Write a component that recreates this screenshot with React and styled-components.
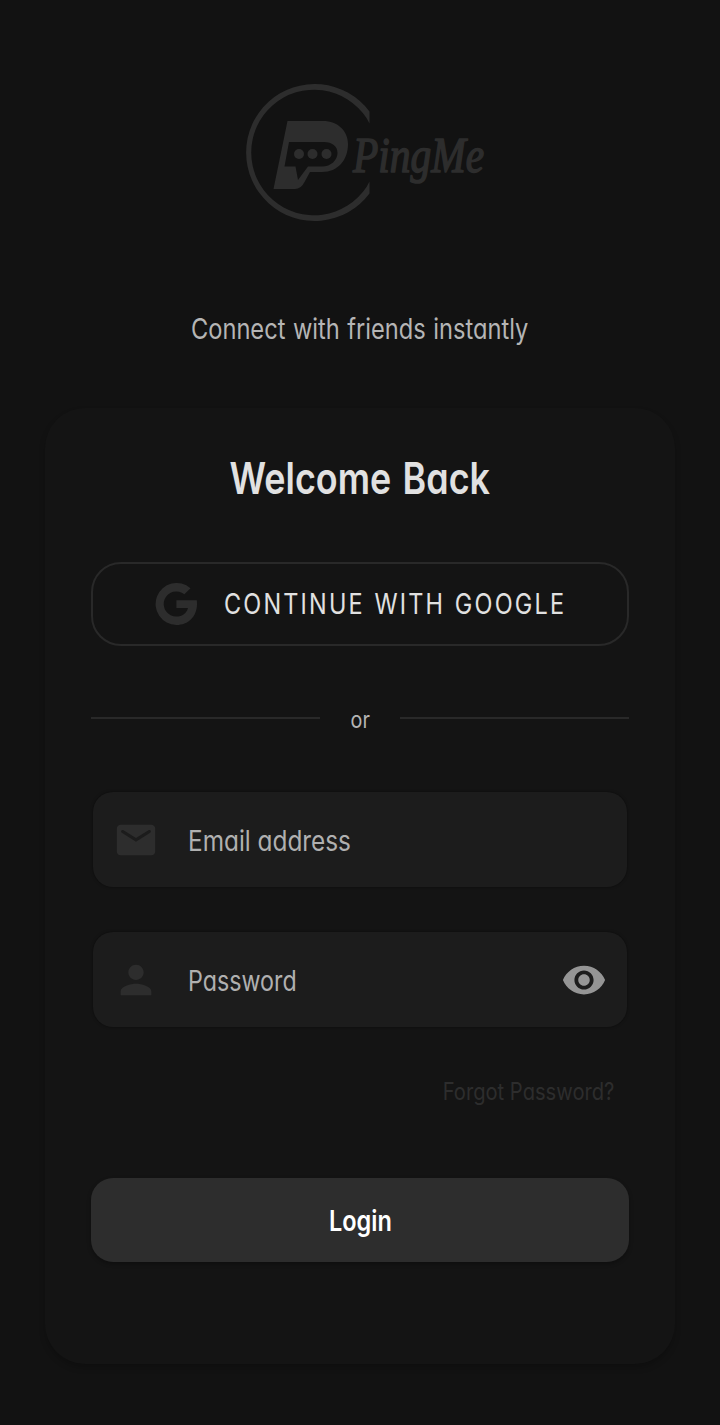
import React from "react";
import styled, { createGlobalStyle } from "styled-components";

const GlobalStyle = createGlobalStyle`
  * { box-sizing: border-box; }
  body {
    margin: 0;
    background: #121212;
    font-family: Inter, "Liberation Sans", sans-serif;
    font-feature-settings: "cv11", "ss03";
  }
`;

const Screen = styled.main`
  min-height: 1425px;
  padding: 78px 45px 0;
  display: flex;
  flex-direction: column;
  align-items: center;
  background: #121212;
`;

const Logo = styled.svg`
  display: block;
  width: 256px;
  height: 150px;
  margin-left: 15px;
  overflow: visible;
  fill: #2d2d2d;
`;

const Narrow = styled.span`
  display: inline-block;
  white-space: nowrap;
  transform: scaleX(${(p) => p.$x});
  transform-origin: ${(p) => p.$from || "center"};
`;

const Tagline = styled.p`
  margin: 81px 0 0;
  height: 40px;
  font-size: 28px;
  line-height: 40px;
  font-weight: 400;
  word-spacing: 1px;
  color: #b5b5b5;
`;

const Card = styled.section`
  width: 630px;
  height: 956px;
  margin-top: 59px;
  padding: 38px 46px 0;
  border-radius: 40px;
  background: #141414;
  box-shadow: 0 4px 6px rgba(0, 0, 0, 0.2);
`;

const Title = styled.h1`
  margin: 0;
  height: 66px;
  font-size: 44px;
  line-height: 64px;
  font-weight: 600;
  word-spacing: 3px;
  text-align: center;
  color: #e1e1e1;
`;

const GoogleButton = styled.button`
  width: 538px;
  height: 84px;
  margin: 50px 0 0;
  padding: 0 0 0 62px;
  display: flex;
  align-items: center;
  gap: 27px;
  border: 2px solid #292929;
  border-radius: 30px;
  background: transparent;
  color: #e1e1e1;
  font: inherit;
  font-size: 28px;
  line-height: 36px;
  letter-spacing: 2.6px;
  word-spacing: 1px;
`;

const Divider = styled.div`
  height: 40px;
  margin-top: 52px;
  display: grid;
  grid-template-columns: 229px 1fr 229px;
  grid-template-rows: 40px;
  align-items: center;
  text-align: center;
  font-size: 23px;
  line-height: 36px;
  font-weight: 400;
  color: #b5b5b5;
`;

const Rule = styled.span`
  height: 2px;
  background: #292929;
`;

const DividerText = styled.span`
  padding-top: 3px;
`;

const Field = styled.label`
  width: 534px;
  height: 95px;
  margin: ${(p) => p.$top}px 2px 0;
  padding: 0 20px;
  display: flex;
  align-items: center;
  border-radius: 20px;
  background: #1c1c1c;
  box-shadow: 0 0 3px rgba(0, 0, 0, 0.5);
  font-size: 28px;
  font-weight: 400;
  color: #b0b0b0;
`;

const FieldText = styled.span`
  flex: 1;
  width: 0;
  margin-left: 29px;
  padding-top: 2px;
`;

const Icon = styled.svg`
  display: block;
  flex: none;
  width: ${(p) => p.$size}px;
  height: ${(p) => p.$size}px;
  fill: ${(p) => p.$color || "#2d2d2d"};
`;

const Forgot = styled.div`
  height: 40px;
  margin: 45px 15px 0 0;
  text-align: right;
  font-size: 24px;
  line-height: 40px;
  font-weight: 400;
  color: #2d2d2d;
`;

const LoginButton = styled.button`
  display: block;
  width: 538px;
  height: 84px;
  margin: 66px 0 0;
  padding: 2px 0 0 1px;
  border: 0;
  border-radius: 22px;
  background: #2d2d2d;
  box-shadow: 0 2px 4px rgba(0, 0, 0, 0.3);
  color: #fff;
  font: inherit;
  font-size: 28px;
  font-weight: 600;
`;

const Script = styled.text`
  font-family: "Liberation Serif", serif;
  font-size: 50px;
  font-style: italic;
  font-weight: 400;
  stroke: #2d2d2d;
  stroke-width: 1.6px;
  stroke-linejoin: round;
`;

function Brand() {
  return (
    <Logo viewBox="240 78 256 150" role="img">
      <path d="M369.500 111.500A68.500 68.500 0 1 0 369.500 193.500V181.500L366.500 187A62.800 62.800 0 1 1 366.500 118L369.500 123.500Z" />
      <path
        fillRule="evenodd"
        d="M287.500 121H323C338 121 348 131 348 144C348 160 338 172 322 172H310L304.500 182Q301 189 295 189H273.500ZM289 142L284.500 166.500H295.500L298 180L308 166.500H322C331 166.500 337.500 160 337.500 153C337.500 146 332 142 324 142Z"
      />
      <circle cx="299" cy="154" r="5" />
      <circle cx="312.500" cy="154" r="5" />
      <circle cx="326.500" cy="154" r="5" />
      <Script x="353" y="172" textLength="131" lengthAdjust="spacingAndGlyphs">
        PingMe
      </Script>
    </Logo>
  );
}

export default function App() {
  return (
    <>
      <GlobalStyle />
      <Screen>
        <Brand />
        <Tagline>
          <Narrow $x={0.845}>Connect with friends instantly</Narrow>
        </Tagline>
        <Card>
          <Title>
            <Narrow $x={0.815}>Welcome Back</Narrow>
          </Title>
          <GoogleButton>
            <Icon $size={42} viewBox="2 2 20 20">
              <path d="M21.900 10.200H12.200V13.900H17.700C17.100 16.400 15 18 12.200 18A6 6 0 1 1 16 7.400L18.900 4.500A10 10 0 1 0 12.200 22C17.800 22 22 18 22 12Q22 11 21.900 10.200Z" />
            </Icon>
            <Narrow $x={0.838} $from="left">CONTINUE WITH GOOGLE</Narrow>
          </GoogleButton>
          <Divider>
            <Rule />
            <DividerText>
              <Narrow $x={0.86}>or</Narrow>
            </DividerText>
            <Rule />
          </Divider>
          <Field $top={54}>
            <Icon $size={46} viewBox="0 0 24 24">
              <path d="M20 4H4c-1.100 0-2 .9-2 2v12c0 1.100.9 2 2 2h16c1.100 0 2-.9 2-2V6c0-1.100-.9-2-2-2zm-.6 4.250-7.400 4.700-7.400-4.700c-.9-.6-.1-1.900.9-1.300L12 11l6.500-4.050c1-.6 1.800.7.900 1.300z" />
            </Icon>
            <FieldText>
              <Narrow $x={0.87} $from="left">Email address</Narrow>
            </FieldText>
          </Field>
          <Field $top={45}>
            <Icon $size={46} viewBox="0 0 24 24">
              <path d="M12 12c2.210 0 4-1.790 4-4s-1.790-4-4-4-4 1.790-4 4 1.790 4 4 4zm0 2c-2.670 0-8 1.340-8 4v2h16v-2c0-2.660-5.330-4-8-4z" />
            </Icon>
            <FieldText>
              <Narrow $x={0.83} $from="left">Password</Narrow>
            </FieldText>
            <Icon $size={46} $color="#959595" viewBox="0 0 24 24">
              <path d="M12 4.500C7 4.500 2.730 7.610 1 12c1.730 4.390 6 7.500 11 7.500s9.270-3.110 11-7.500c-1.730-4.390-6-7.500-11-7.500zM12 17c-2.760 0-5-2.240-5-5s2.240-5 5-5 5 2.240 5 5-2.240 5-5 5zm0-8c-1.660 0-3 1.340-3 3s1.340 3 3 3 3-1.340 3-3-1.340-3-3-3z" />
            </Icon>
          </Field>
          <Forgot>
            <Narrow $x={0.84} $from="right">Forgot Password?</Narrow>
          </Forgot>
          <LoginButton>
            <Narrow $x={0.84}>Login</Narrow>
          </LoginButton>
        </Card>
      </Screen>
    </>
  );
}
